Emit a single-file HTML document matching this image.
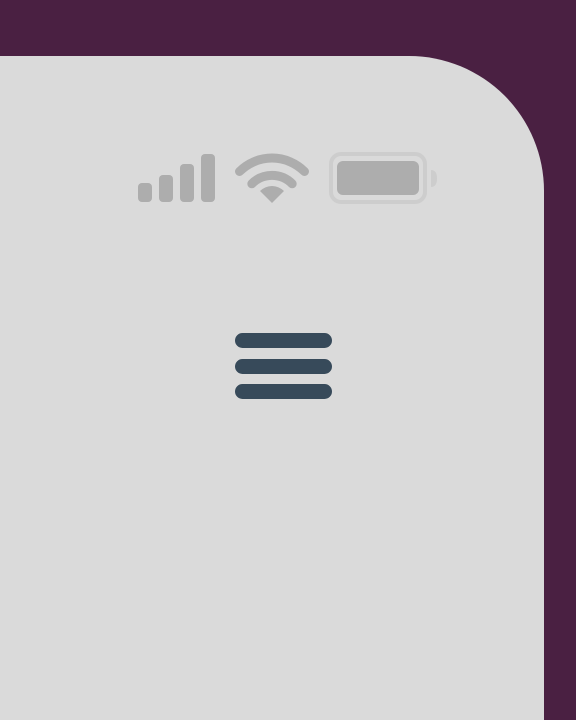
<!DOCTYPE html>
<html><head><style>
html,body{margin:0;padding:0;width:576px;height:720px;overflow:hidden;background:#4a2042;}
.panel{position:absolute;left:0;top:56px;width:544px;bottom:0;background:#dadada;border-top-right-radius:135px;}
.hb{position:absolute;left:235px;width:97px;height:15px;border-radius:8px;background:#374a5a;}
</style></head><body>
<div class="panel"></div>
<svg style="position:absolute;left:0;top:0" width="576" height="720">
<g fill="#adadad">
<rect x="138" y="183" width="14" height="19" rx="4"/>
<rect x="159" y="175" width="14" height="27" rx="4"/>
<rect x="180" y="164" width="14" height="38" rx="4"/>
<rect x="201" y="154" width="14" height="48" rx="4"/>
</g>
<g fill="none" stroke="#adadad" stroke-width="9" stroke-linecap="round">
<path d="M239.5 171.5 A46 46 0 0 1 304.5 171.5"/>
<path d="M251.8 183.8 A28.5 28.5 0 0 1 292.2 183.8"/>
</g>
<path d="M272 203 L260 191 A17 17 0 0 1 284 191 Z" fill="#adadad"/>
<rect x="331" y="154" width="94" height="48" rx="10" fill="none" stroke="#cdcdcd" stroke-width="4"/>
<rect x="337" y="161" width="82" height="34" rx="6" fill="#adadad"/>
<path d="M431 170 Q437 170 437 178.5 Q437 187 431 187 Z" fill="#cdcdcd"/>
</svg>
<div class="hb" style="top:333px"></div>
<div class="hb" style="top:359px"></div>
<div class="hb" style="top:384px"></div>
</body></html>
